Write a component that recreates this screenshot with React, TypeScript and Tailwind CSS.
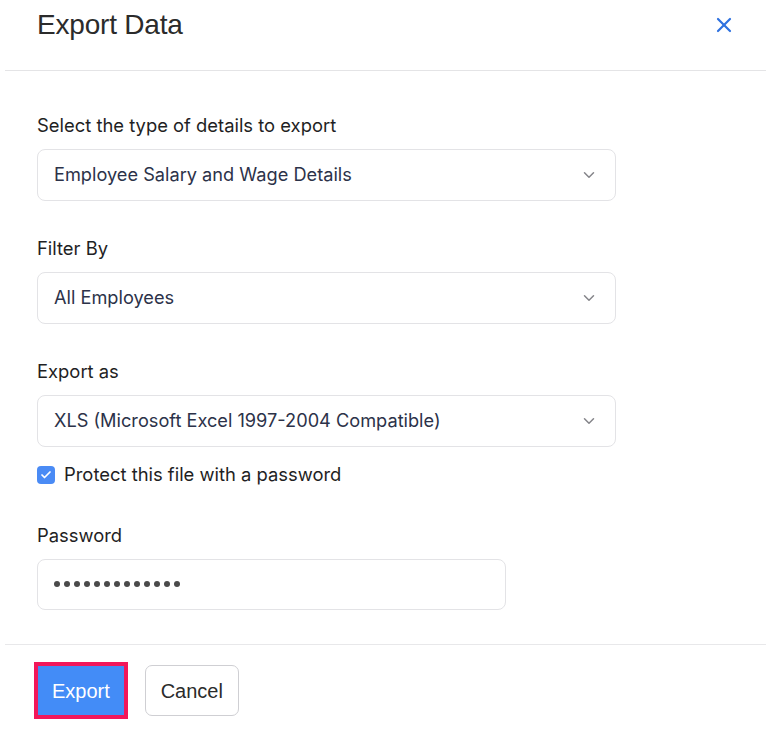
import { ChevronDown, X, Check } from 'lucide-react';

const inter = { fontFamily: 'Inter, "Noto Sans", sans-serif' };
const helv = { fontFamily: '"Liberation Sans", Arial, sans-serif' };

function SelectField({ label, value }: { label: string; value: string }) {
  return (
    <div className="flex flex-col">
      <label className="text-[18.4px] text-[#1f1f24] leading-[24px] mb-[12px]">{label}</label>
      <div className="w-[579px] h-[52px] rounded-[8px] border border-[#e3e3e6] bg-white flex items-center justify-between pl-[16px] pr-[17px]">
        <span className="text-[18.2px] text-[#2c3249]">{value}</span>
        <ChevronDown className="w-[18px] h-[18px] text-[#85858a]" strokeWidth={2} />
      </div>
    </div>
  );
}

export default function App() {
  return (
    <div className="w-[766px] h-[736px] bg-white flex flex-col" style={inter}>
      <div className="h-[71px] ml-[5px] border-b border-[#e4e4e6] flex items-center justify-between pl-[32px] pr-[30px] pb-[20px]">
        <h1 className="text-[28px] text-[#2b2b2b] tracking-[-0.2px]" style={helv}>
          Export Data
        </h1>
        <X className="w-[24px] h-[24px] text-[#2f72e0]" strokeWidth={2.2} />
      </div>

      <div className="flex-1 flex flex-col pl-[32px] pt-[42px] border-b border-[#e8e8ea] ml-[5px]">
        <div className="flex flex-col gap-[35px]">
          <SelectField label="Select the type of details to export" value="Employee Salary and Wage Details" />
          <SelectField label="Filter By" value="All Employees" />
          <SelectField label="Export as" value="XLS (Microsoft Excel 1997-2004 Compatible)" />
        </div>

        <label className="flex items-center gap-[9px] mt-[14px]">
          <span className="w-[18px] h-[18px] rounded-[4px] bg-[#4a8bf5] flex items-center justify-center">
            <Check className="w-[12px] h-[12px] text-white" strokeWidth={3.5} />
          </span>
          <span className="text-[18.4px] text-[#1f1f24]">Protect this file with a password</span>
        </label>

        <div className="flex flex-col mt-[34px]">
          <label className="text-[18.4px] text-[#1f1f24] leading-[24px] mb-[12px]">Password</label>
          <div className="w-[469px] h-[51px] rounded-[8px] border border-[#e3e3e6] flex items-center gap-[4px] pl-[16px]">
            {Array.from({ length: 13 }).map((_, i) => (
              <span key={i} className="w-[6px] h-[6px] rounded-full bg-[#4a4a4a]" />
            ))}
          </div>
        </div>
      </div>

      <div className="h-[91px] flex items-center gap-[17px] pl-[34px]">
        <button
          className="h-[57px] px-[14px] bg-[#438cf7] text-white text-[20px] border-[4px] border-[#f2175a]"
          style={helv}
        >
          Export
        </button>
        <button
          className="h-[51px] w-[94px] rounded-[7px] border border-[#cfcfd3] text-[#2b2b2b] text-[20px] bg-white"
          style={helv}
        >
          Cancel
        </button>
      </div>
    </div>
  );
}
